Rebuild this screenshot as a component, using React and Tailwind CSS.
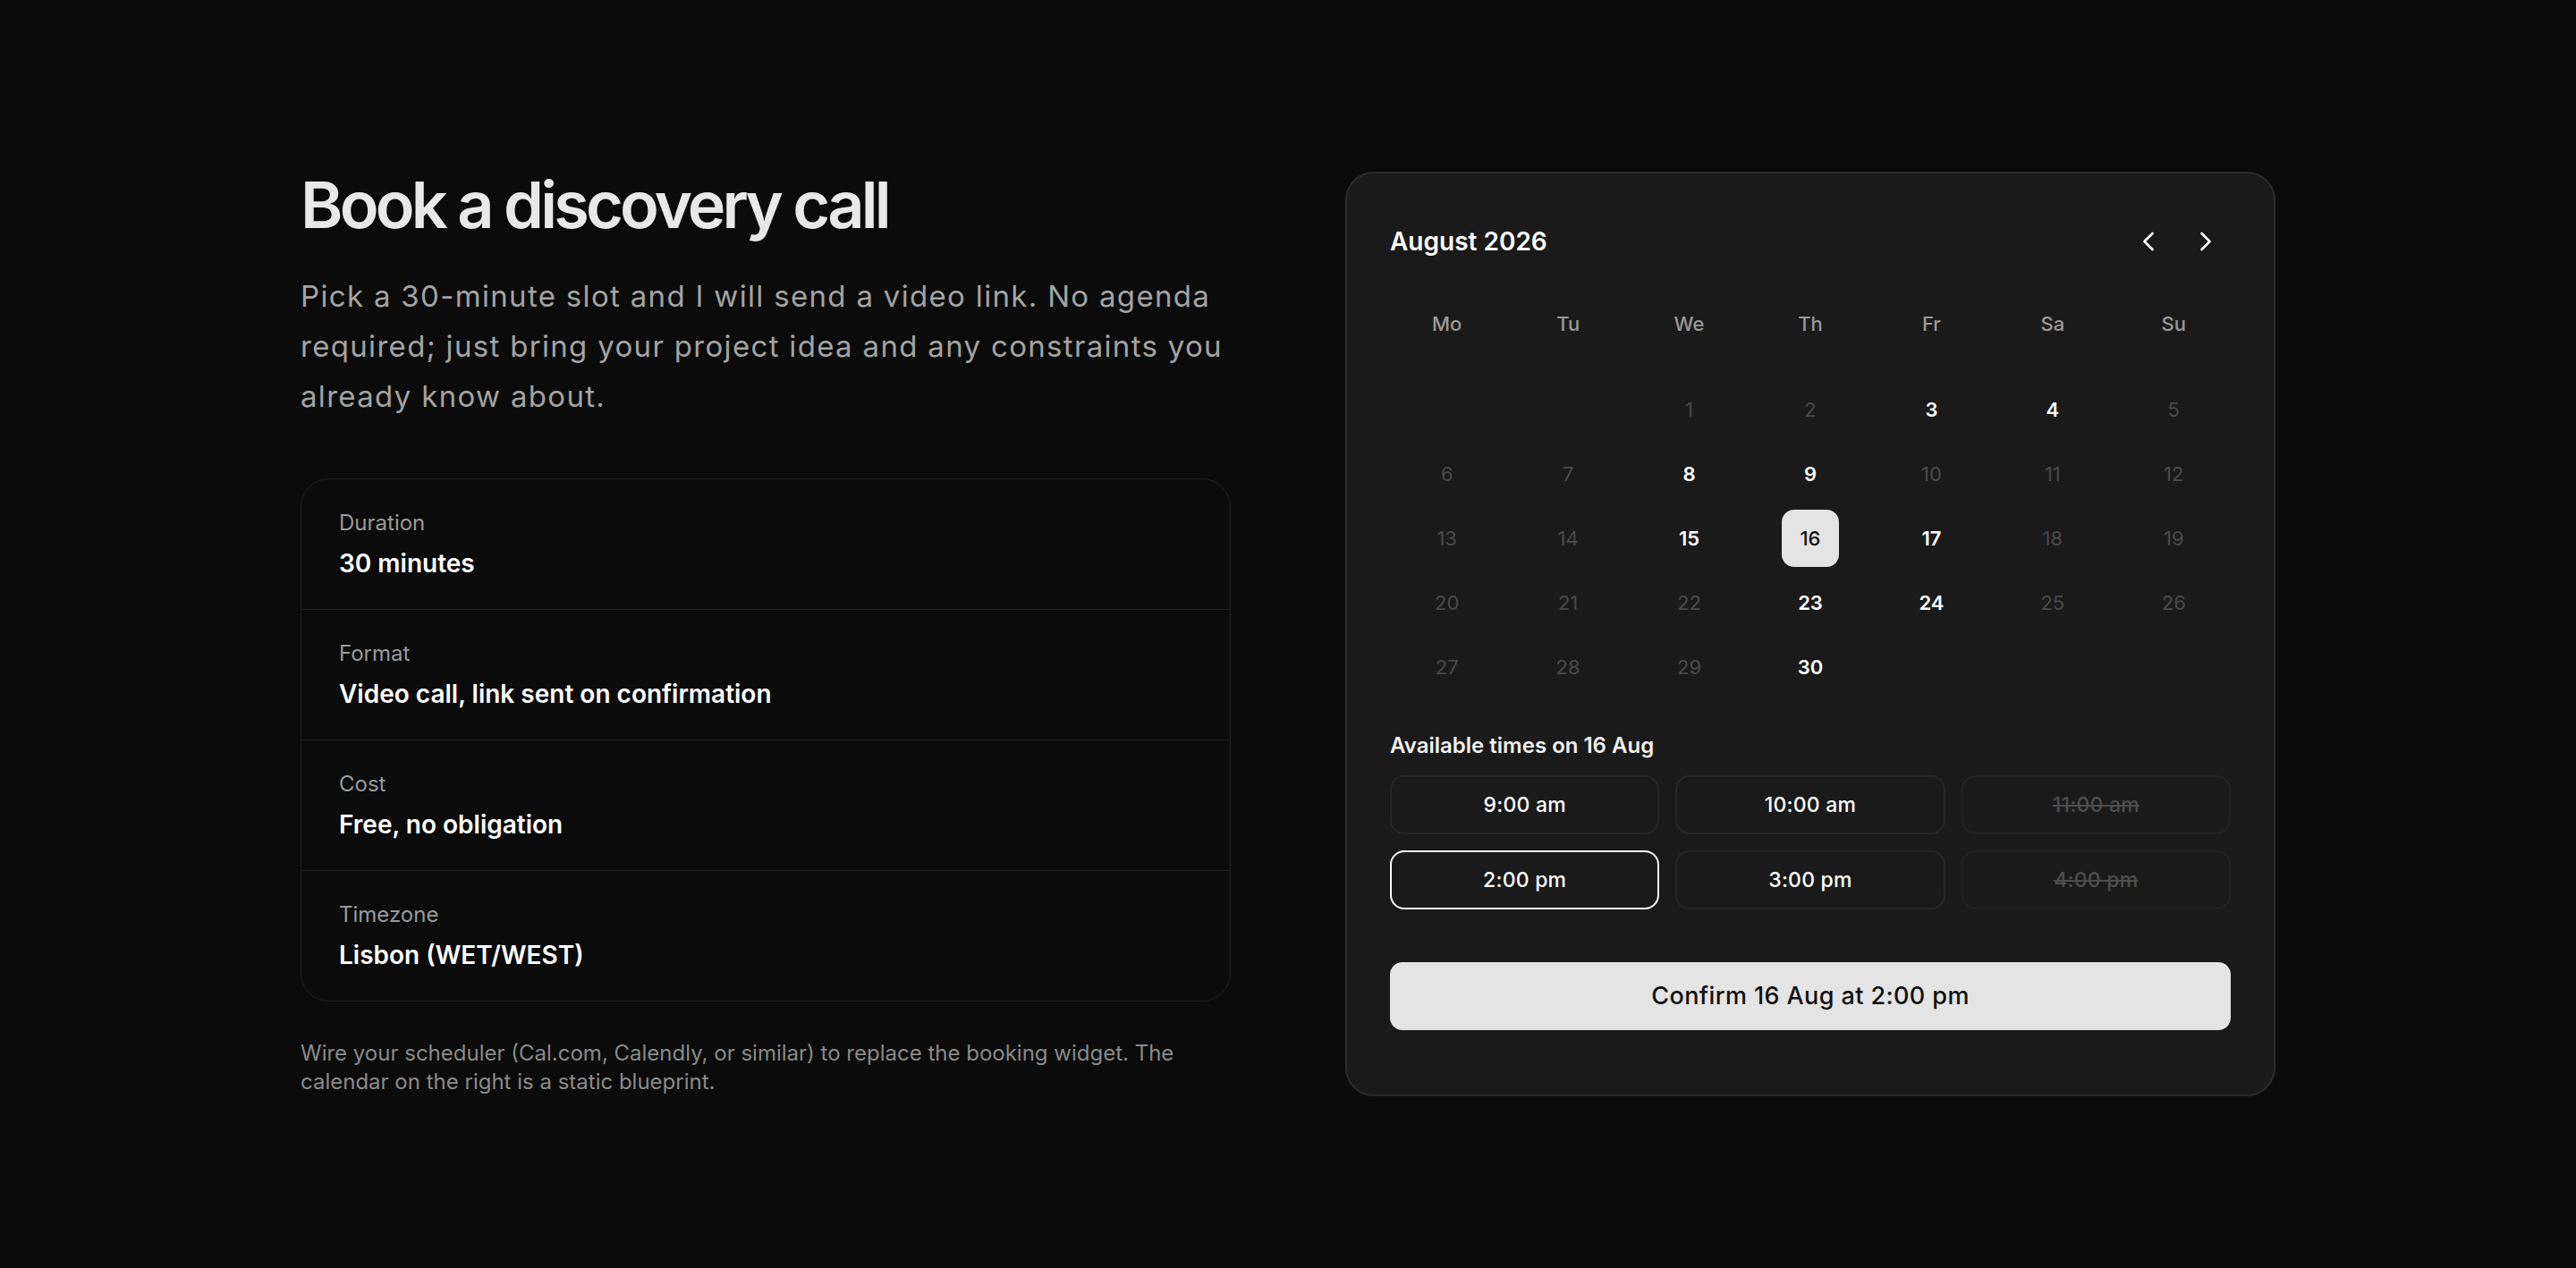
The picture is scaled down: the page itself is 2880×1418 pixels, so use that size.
import React from 'react';
import { ChevronLeft, ChevronRight } from 'lucide-react';

const details = [
    { label: 'Duration', value: '30 minutes' },
    { label: 'Format', value: 'Video call, link sent on confirmation' },
    { label: 'Cost', value: 'Free, no obligation' },
    { label: 'Timezone', value: 'Lisbon (WET/WEST)' },
];

const weekdays = ['Mo', 'Tu', 'We', 'Th', 'Fr', 'Sa', 'Su'];

const available = [3, 4, 8, 9, 15, 16, 17, 23, 24, 30];
const selectedDay = 16;

const slots = [
    { time: '9:00 am' },
    { time: '10:00 am' },
    { time: '11:00 am', disabled: true },
    { time: '2:00 pm', selected: true },
    { time: '3:00 pm' },
    { time: '4:00 pm', disabled: true },
];

const buildDays = () => {
    const cells = [null, null];
    for (let d = 1; d <= 30; d++) cells.push(d);
    return cells;
};

const DayCell = ({ day }) => {
    if (day === null) return <div className="h-[64px]" />;
    const isSelected = day === selectedDay;
    const isAvailable = available.includes(day);

    let tone = 'text-[#4a4a4a] font-normal';
    if (isSelected) tone = 'bg-[#e4e4e4] text-[#111111] font-medium rounded-[14px]';
    else if (isAvailable) tone = 'text-white font-semibold';

    return (
        <div className="flex justify-center">
            <div className={`w-[64px] h-[64px] flex items-center justify-center text-[22px] ${tone}`}>
                {day}
            </div>
        </div>
    );
};

const SlotButton = ({ slot }) => {
    let style = 'border-[#272727] text-white';
    if (slot.selected) style = 'border-white text-white';
    if (slot.disabled) style = 'border-[#222222] text-[#4d4d4d] line-through';

    return (
        <div className={`h-[66px] rounded-[16px] border-2 flex items-center justify-center text-[23px] font-medium tracking-[0.01em] ${style}`}>
            {slot.time}
        </div>
    );
};

export default function App() {
    const days = buildDays();

    return (
        <div className="min-h-screen w-full bg-[#0b0b0b] flex items-center justify-center font-['Inter',sans-serif]">
            <div className="grid grid-cols-[1040px_1040px] gap-[128px] items-center">
                {/* Left column */}
                <div>
                    <h1 className="text-[72px] leading-[72px] font-semibold tracking-[-0.053em] text-[#e8e8e8]">
                        Book a discovery call
                    </h1>
                    <p className="mt-[38px] text-[33px] leading-[56px] tracking-[0.04em] text-[#a3a3a3]">
                        Pick a 30-minute slot and I will send a video link. No agenda required; just bring your project idea and any constraints you already know about.
                    </p>

                    <div className="mt-[64px] rounded-[32px] border border-[#1f1f1f]">
                        {details.map((item, i) => (
                            <div
                                key={item.label}
                                className={`px-[42px] py-[31px] ${i < details.length - 1 ? 'border-b border-[#1f1f1f]' : ''}`}
                            >
                                <div className="text-[24px] leading-[36px] text-[#9a9a9a]">{item.label}</div>
                                <div className="mt-[7px] text-[28px] leading-[40px] font-semibold text-white">{item.value}</div>
                            </div>
                        ))}
                    </div>

                    <p className="mt-[42px] text-[24px] leading-[32px] text-[#8a8a8a]">
                        Wire your scheduler (Cal.com, Calendly, or similar) to replace the booking widget. The calendar on the right is a static blueprint.
                    </p>
                </div>

                {/* Booking card */}
                <div className="rounded-[32px] border-2 border-[#2b2b2b] bg-[#1a1a1a] px-[48px] pt-[48px] pb-[72px]">
                    <div className="h-[56px] flex items-center justify-between">
                        <h2 className="text-[28px] font-semibold text-white">August 2026</h2>
                        <div className="flex gap-2">
                            <button className="w-[56px] h-[56px] flex items-center justify-center text-white">
                                <ChevronLeft size={36} strokeWidth={1.75} />
                            </button>
                            <button className="w-[56px] h-[56px] flex items-center justify-center text-white">
                                <ChevronRight size={36} strokeWidth={1.75} />
                            </button>
                        </div>
                    </div>

                    <div className="mt-[32px] -mx-[4px] grid grid-cols-7 h-[64px] items-center">
                        {weekdays.map((d) => (
                            <div key={d} className="text-center text-[22px] font-medium text-[#9a9a9a]">{d}</div>
                        ))}
                    </div>

                    <div className="mt-[32px] -mx-[4px] grid grid-cols-7 gap-y-[8px]">
                        {days.map((day, i) => (
                            <DayCell key={i} day={day} />
                        ))}
                    </div>

                    <div className="mt-[42px] text-[24px] leading-[28px] font-semibold text-[#f0f0f0]">
                        Available times on 16 Aug
                    </div>

                    <div className="mt-[19px] grid grid-cols-3 gap-[18px]">
                        {slots.map((slot) => (
                            <SlotButton key={slot.time} slot={slot} />
                        ))}
                    </div>

                    <button className="mt-[59px] w-full h-[76px] rounded-[14px] bg-[#e4e4e4] text-[#111111] text-[27px] font-medium tracking-[0.015em]">
                        Confirm 16 Aug at 2:00 pm
                    </button>
                </div>
            </div>
        </div>
    );
}
